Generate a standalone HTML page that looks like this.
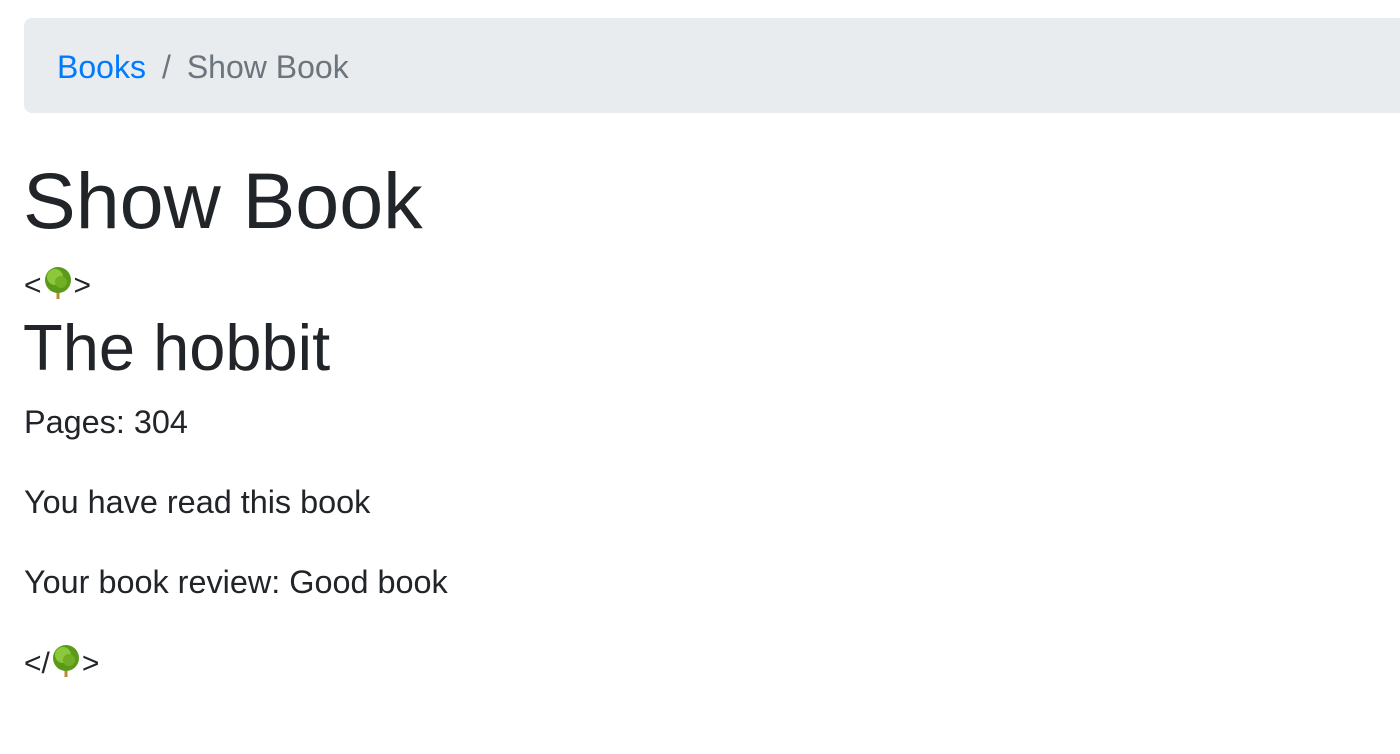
<!DOCTYPE html>
<html><head><style>
body{margin:0;width:1400px;height:754px;background:#fff;font-family:"Liberation Sans",Arial,sans-serif;color:#212529;position:relative;overflow:hidden}
.bc{position:absolute;left:24px;top:18px;width:1400px;height:95px;background:#e9ecef;border-radius:8px}
.t{position:absolute;white-space:nowrap;line-height:1}
svg{vertical-align:-4px}
</style></head><body>
<div class="bc"></div>
<div class="t" style="left:57px;top:51px;font-size:32px"><span style="color:#007bff">Books</span><span style="color:#6c757d;padding:0 16px">/</span><span style="color:#6c757d">Show Book</span></div>
<div class="t" style="left:23px;top:161px;font-size:79px">Show Book</div>
<div class="t" style="left:24px;top:267px;font-size:30px">&lt;<svg width="32" height="32" viewBox="0 0 32 32"><rect x="14.5" y="22" width="3" height="10" fill="#c08a2a"/><circle cx="16" cy="13" r="13" fill="#5a9a18"/><circle cx="13" cy="10" r="8" fill="#8cc83a"/><circle cx="19" cy="15" r="6" fill="#6fae25"/></svg>&gt;</div>
<div class="t" style="left:23px;top:315px;font-size:65px">The hobbit</div>
<div class="t" style="left:24px;top:406px;font-size:32.4px">Pages: 304</div>
<div class="t" style="left:24px;top:486px;font-size:32.4px">You have read this book</div>
<div class="t" style="left:24px;top:566px;font-size:32.4px">Your book review: Good book</div>
<div class="t" style="left:24px;top:645px;font-size:30px">&lt;/<svg width="32" height="32" viewBox="0 0 32 32"><rect x="14.5" y="22" width="3" height="10" fill="#c08a2a"/><circle cx="16" cy="13" r="13" fill="#5a9a18"/><circle cx="13" cy="10" r="8" fill="#8cc83a"/><circle cx="19" cy="15" r="6" fill="#6fae25"/></svg>&gt;</div>
</body></html>
